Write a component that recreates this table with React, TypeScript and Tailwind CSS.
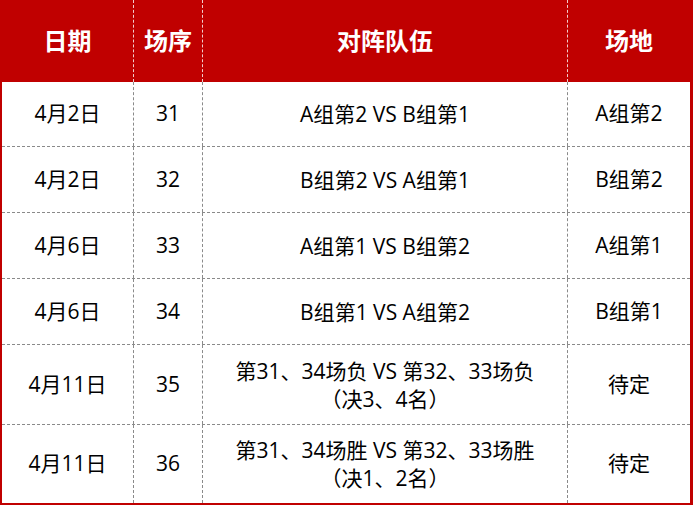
import React from "react";

const rows = [
  { d: "4月2日", n: "31", m: ["A组第2 VS B组第1"], p: "A组第2", h: "h-[65px]" },
  { d: "4月2日", n: "32", m: ["B组第2 VS A组第1"], p: "B组第2", h: "h-[66px]" },
  { d: "4月6日", n: "33", m: ["A组第1 VS B组第2"], p: "A组第1", h: "h-[66px]" },
  { d: "4月6日", n: "34", m: ["B组第1 VS A组第2"], p: "B组第1", h: "h-[66px]" },
  { d: "4月11日", n: "35", m: ["第31、34场负 VS 第32、33场负", "（决3、4名）"], p: "待定", h: "h-[80px]" },
  { d: "4月11日", n: "36", m: ["第31、34场胜 VS 第32、33场胜", "（决1、2名）"], p: "待定", h: "h-[78px]" },
];

export default function App() {
  return (
    <div
      className="w-[693px] h-[505px] bg-white flex flex-col border-l-2 border-r-[3px] border-b-2 border-[#c00000] text-black"
      style={{ fontFamily: '"Open Sans", "Noto Sans CJK SC", sans-serif' }}
    >
      <div className="flex h-[82px] bg-[#c00000] text-white font-bold text-[24px] shrink-0">
        <div className="w-[132px] flex items-center justify-center border-r border-dashed border-white/80">日期</div>
        <div className="w-[69px] flex items-center justify-center border-r border-dashed border-white/80">场序</div>
        <div className="w-[365px] flex items-center justify-center border-r border-dashed border-white/80">对阵队伍</div>
        <div className="flex-1 flex items-center justify-center">场地</div>
      </div>
      {rows.map((r, i) => (
        <div
          key={i}
          className={`flex shrink-0 text-[21px] ${r.h} ${i < rows.length - 1 ? "border-b border-dashed border-[#8a8a8a]" : ""}`}
        >
          <div className="w-[132px] flex items-center justify-center border-r border-dashed border-[#8a8a8a]">{r.d}</div>
          <div className="w-[69px] flex items-center justify-center border-r border-dashed border-[#8a8a8a]">{r.n}</div>
          <div className="w-[365px] flex flex-col items-center justify-center border-r border-dashed border-[#8a8a8a] leading-[28px]">
            {r.m.map((t, j) => (
              <div key={j}>{t}</div>
            ))}
          </div>
          <div className="flex-1 flex items-center justify-center">{r.p}</div>
        </div>
      ))}
    </div>
  );
}
